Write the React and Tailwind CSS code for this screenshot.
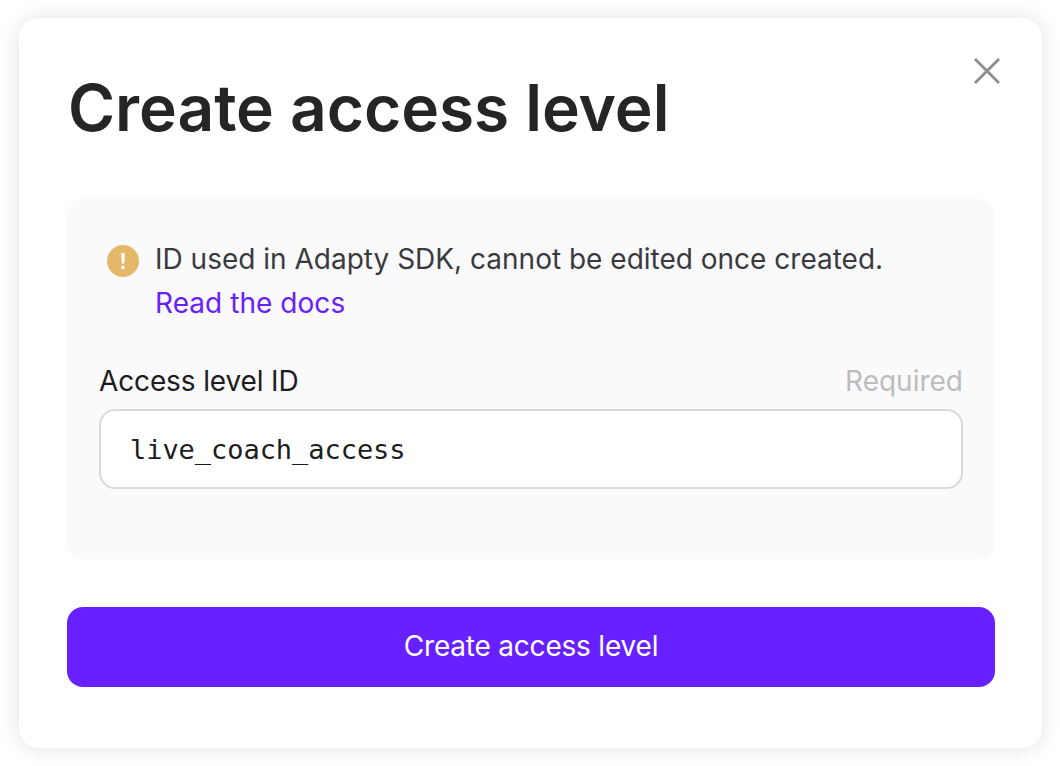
export default function App() {
  return (
    <div className="w-[1060px] h-[766px] bg-white overflow-hidden pl-[19px] pr-[18px] pt-[18px] font-['Inter',sans-serif]">
      <div className="relative h-[730px] rounded-[20px] bg-white pl-[48px] pr-[47px] pt-[48px] shadow-[0_0_20px_rgba(30,30,60,0.13)]">
        <button className="absolute right-[42px] top-[40px] text-[#8c8c8c]" aria-label="Close">
          <svg width="26" height="26" viewBox="0 0 26 26" fill="none" stroke="currentColor" strokeWidth="2.8">
            <path d="M1 1L25 25M25 1L1 25" />
          </svg>
        </button>
        <h1 className="text-[64px] leading-[80px] font-semibold text-[#252525] pl-[1px] mt-[2px] tracking-[-0.05px]">Create access level</h1>
        <div className="mt-[51px] h-[360px] rounded-[16px] bg-[#fafafc] px-[32px] pt-[38px]">
          <div className="flex pl-[8px] gap-[16px]">
            <svg width="32" height="32" viewBox="0 0 32 32" className="mt-[8px] shrink-0">
              <circle cx="16" cy="16" r="16" fill="#e5b769" />
              <path d="M14.2 8h3.6l-.5 10.5h-2.6z" fill="#fff" />
              <circle cx="16" cy="22.4" r="1.9" fill="#fff" />
            </svg>
            <div className="text-[28px] leading-[44px] text-[#3a3a3e]">
              <div>ID used in Adapty SDK, cannot be edited once created.</div>
              <a className="text-[#6720ff] tracking-[0.05px]">Read the docs</a>
            </div>
          </div>
          <div className="mt-[36px] flex items-center justify-between h-[40px]">
            <span className="text-[28px] text-[#1c1c1e] tracking-[-0.13px]">Access level ID</span>
            <span className="text-[28px] text-[#bdbdbd]">Required</span>
          </div>
          <div className="mt-[8px] h-[80px] rounded-[16px] border-2 border-[#d9d9d9] bg-white pl-[29px] pt-[2px] flex items-center font-['DejaVu_Sans_Mono',monospace] text-[27px] text-[#1c1c1e] tracking-[-0.05px]">
            live_coach_access
          </div>
        </div>
        <button className="mt-[48px] block w-full h-[80px] rounded-[16px] bg-[#6720ff] text-[28px] font-normal text-white tracking-[-0.2px] pb-[2px]">Create access level</button>
      </div>
    </div>
  );
}
